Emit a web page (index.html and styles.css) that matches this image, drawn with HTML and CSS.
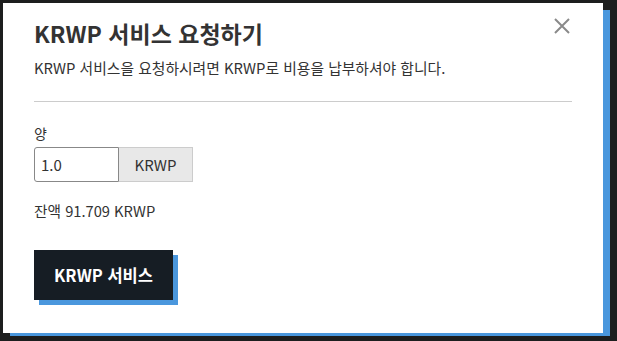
FILE: index.html
```html
<!DOCTYPE html>
<html lang="ko">
<head>
  <meta charset="UTF-8">
  <meta name="viewport" content="width=device-width, initial-scale=1.0">
  <title>KRWP 서비스 요청하기</title>
  <link rel="stylesheet" href="styles.css">
</head>
<body>
  <div class="modal">
    <button class="close-button" aria-label="닫기">
      <svg width="16" height="16" viewBox="0 0 16 16">
        <path d="M1 1 L15 15 M15 1 L1 15" stroke="#8a8a8a" stroke-width="2" fill="none"/>
      </svg>
    </button>
    <h2>KRWP 서비스 요청하기</h2>
    <p class="subtitle">KRWP 서비스을 요청하시려면 KRWP로 비용을 납부하셔야 합니다.</p>
    <hr>
    <div class="input-group">
      <label for="amount">양</label>
      <div class="amount-row">
        <input type="text" id="amount" value="1.0">
        <span class="addon">KRWP</span>
      </div>
    </div>
    <p class="balance">잔액 91.709 KRWP</p>
    <button class="submit-button">KRWP 서비스</button>
  </div>
</body>
</html>
```

FILE: styles.css
```css
/* modal styles */
body {
  margin: 0;
  padding: 3px;
  background-color: #1d1e1e;
  font-family: "Noto Sans CJK KR", "Noto Sans", sans-serif;
  color: #333;
}

.modal {
  position: relative;
  width: 600px;
  height: 330px;
  box-sizing: border-box;
  padding: 14px 31px 0 31px;
  background-color: #fff;
  box-shadow: 7px 7px 0 #4a97dd;
}

.close-button {
  position: absolute;
  top: 15px;
  right: 33px;
  padding: 0;
  border: none;
  background: none;
  cursor: pointer;
}

.modal h2 {
  margin: 0;
  font-size: 23px;
  font-weight: 700;
  line-height: 32px;
}

.subtitle {
  margin: 9px 0 0 0;
  font-size: 14.8px;
  line-height: 20px;
}

.modal hr {
  margin: 23px 0 0 0;
  border: none;
  border-top: 1px solid #ccc;
}

.input-group {
  margin-top: 21px;
}

.input-group label {
  display: block;
  font-size: 14px;
  line-height: 20px;
  margin-bottom: 4px;
}

.amount-row {
  display: flex;
}

.amount-row input {
  width: 85px;
  height: 35px;
  box-sizing: border-box;
  padding: 0 6px;
  border: 1px solid #888;
  border-radius: 3px 0 0 3px;
  font-family: inherit;
  font-size: 15px;
  color: #333;
}

.addon {
  display: flex;
  align-items: center;
  justify-content: center;
  width: 74px;
  height: 35px;
  box-sizing: border-box;
  background-color: #e8e8e8;
  border: 1px solid #ccc;
  border-left: none;
  font-size: 15px;
}

.balance {
  margin: 19px 0 0 0;
  font-size: 14.7px;
  line-height: 20px;
}

.submit-button {
  margin-top: 29px;
  width: 139px;
  height: 50px;
  border: none;
  background-color: #161d24;
  color: #fff;
  font-family: inherit;
  font-size: 16.5px;
  font-weight: 700;
  box-shadow: 5px 5px 0 #4a97dd;
  cursor: pointer;
}
```
